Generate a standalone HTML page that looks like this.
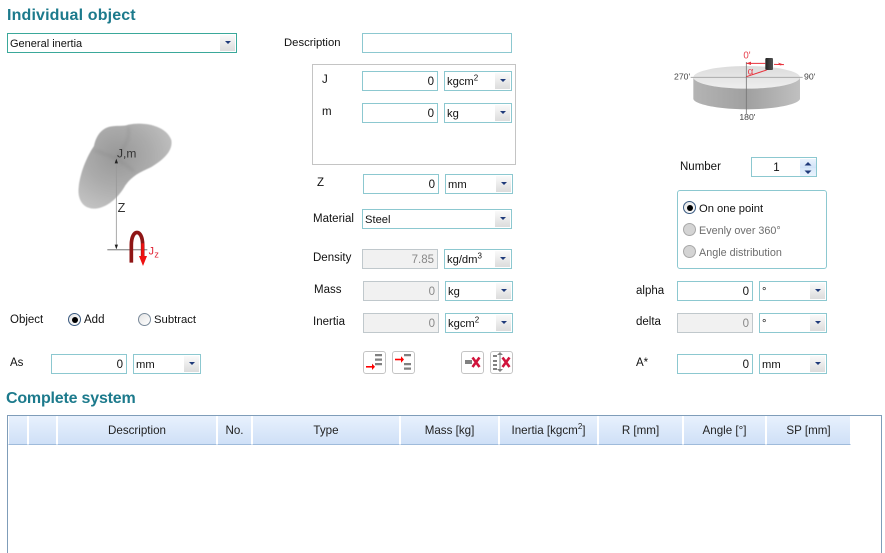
<!DOCTYPE html>
<html><head><meta charset="utf-8"><style>
html,body{margin:0;padding:0;background:#fff}
#r{position:relative;width:885px;height:553px;overflow:hidden;background:#fff;font:11.5px/14px "Liberation Sans",sans-serif;color:#111}
#r div{position:absolute;box-sizing:border-box}
.t{font:bold 16px/18px "Liberation Sans",sans-serif;color:#1c7a8c;white-space:nowrap}
.l{white-space:nowrap;margin-top:1px}
.i{width:76px;height:20px;border:1px solid #8cc8d0;background:#fff;text-align:right;padding:3px 3px 0 0}
.d{background:#f1f1f1;border-color:#c0c8cc;color:#888}
.s{width:68px;height:20px;border:1px solid #8cc8d0;background:#fff;padding:3px 0 0 2px;white-space:nowrap;font-size:11.2px}
.s sup{font-size:8px;line-height:0}
.a{right:1px;top:1px;width:15px;height:16px;background:linear-gradient(#fafafa,#dcdcdc)}
.a:after{content:"";position:absolute;left:5px;top:6px;border:3px solid transparent;border-top:3px solid #1f3a7a;border-bottom:0}
.b{width:23px;height:23px;border:1px solid #c4c4c4;border-radius:3px;background:#fff}
.b svg{position:absolute;left:0;top:0}
.h{top:416px;height:29px;background:linear-gradient(#e8f1fd,#cfe0f7);border-left:1px solid #fff;border-right:1px solid #fff;border-bottom:1px solid #9fbbdb;text-align:center;padding-top:8px;white-space:nowrap;color:#222;font-size:11.6px}
.h sup{font-size:8px;line-height:0}
.ro{width:13px;height:13px;border-radius:50%;border:1px solid #7a8a9a;background:linear-gradient(135deg,#e4e4e4,#fff)}
.on:after{content:"";position:absolute;left:2.5px;top:2.5px;width:6px;height:6px;border-radius:50%;background:#000}
.gr{background:#d4d4d4;border-color:#a8a8a8}
.g2{color:#6d6d6d;font-size:10.8px}
</style></head><body><div id="r">

<div class="t" style="left:7px;top:7px;letter-spacing:.15px">Individual object</div>
<div class="s" style="left:7px;top:33px;width:230px;border-color:#3aa89a;font-size:11px">General inertia<div class="a"></div></div>

<svg style="position:absolute;left:60px;top:110px" width="130" height="160" viewBox="0 0 390 480">
<defs><radialGradient id="g" cx="42%" cy="38%" r="70%"><stop offset="0" stop-color="#989898"/><stop offset=".5" stop-color="#ababab"/><stop offset="1" stop-color="#c4c4c4"/></radialGradient>
<filter id="bl"><feGaussianBlur stdDeviation="1.500"/></filter><filter id="b2"><feGaussianBlur stdDeviation="5"/></filter></defs>
<g filter="url(#bl)">
<path d="M102 108C108 78 124 56 150 50C172 46 190 50 206 44C250 34 318 46 334 90C340 122 310 150 272 172C240 186 216 198 196 226C176 262 140 296 100 296C68 294 52 268 56 232C60 190 80 140 102 108Z" fill="url(#g)"/>
<path d="M104 122C130 130 170 140 222 184M168 146C190 110 214 90 204 50" fill="none" stroke="#777" stroke-width="5" opacity=".35" filter="url(#b2)"/>
</g>
<path d="M169 150V415" stroke="#999" stroke-width="2.500"/>
<path d="M169 146l-5 14h10zM169 418l-5-14h10z" fill="#222"/>
<path d="M142 419H262" stroke="#999" stroke-width="4"/>
<path d="M214 458V405C214 355 248 355 248 405V440" fill="none" stroke="#8f1616" stroke-width="11"/>
<path d="M248 400V440" stroke="#e11" stroke-width="8"/>
<path d="M237 438H261L249 468Z" fill="#e11"/>
<text x="171" y="143" font-family="Liberation Sans" font-size="36" fill="#333">J,m</text>
<text x="173" y="306" font-family="Liberation Sans" font-size="38" fill="#333">Z</text>
<text x="266" y="433" font-family="Liberation Sans" font-size="32" fill="#e01f30">J</text>
<text x="283" y="443" font-family="Liberation Sans" font-size="27" fill="#e01f30">z</text>
</svg>

<div class="l" style="left:10px;top:312px">Object</div>
<div class="ro on" style="left:68px;top:313px;border-color:#3a5a80"></div><div class="l" style="left:84px;top:312px">Add</div>
<div class="ro" style="left:138px;top:313px"></div><div class="l" style="left:154px;top:312px;font-size:11.3px">Subtract</div>

<div class="l" style="left:10px;top:355px">As</div>
<div class="i" style="left:51px;top:354px">0</div>
<div class="s" style="left:133px;top:354px">mm<div class="a"></div></div>

<div class="l" style="left:284px;top:35px;font-size:11.3px">Description</div>
<div class="i" style="left:362px;top:33px;width:150px"></div>

<div style="left:312px;top:64px;width:204px;height:101px;border:1px solid #c4c4c4"></div>
<div class="l" style="left:322px;top:72px">J</div>
<div class="i" style="left:362px;top:71px">0</div>
<div class="s" style="left:444px;top:71px">kgcm<sup>2</sup><div class="a"></div></div>
<div class="l" style="left:322px;top:104px">m</div>
<div class="i" style="left:362px;top:103px">0</div>
<div class="s" style="left:444px;top:103px">kg<div class="a"></div></div>

<div class="l" style="left:317px;top:175px">Z</div>
<div class="i" style="left:363px;top:174px">0</div>
<div class="s" style="left:445px;top:174px">mm<div class="a"></div></div>

<div class="l" style="left:313px;top:211px">Material</div>
<div class="s" style="left:362px;top:209px;width:150px">Steel<div class="a"></div></div>

<div class="l" style="left:313px;top:250px">Density</div>
<div class="i d" style="left:362px;top:249px">7.85</div>
<div class="s" style="left:444px;top:249px">kg/dm<sup>3</sup><div class="a"></div></div>

<div class="l" style="left:314px;top:282px">Mass</div>
<div class="i d" style="left:363px;top:281px">0</div>
<div class="s" style="left:445px;top:281px">kg<div class="a"></div></div>

<div class="l" style="left:313px;top:314px">Inertia</div>
<div class="i d" style="left:363px;top:313px">0</div>
<div class="s" style="left:445px;top:313px">kgcm<sup>2</sup><div class="a"></div></div>

<div class="b" style="left:363px;top:351px"><svg width="21" height="21"><path d="M11 2h7v2.200h-7zM11 6.500h7v2.200h-7zM11 11h7v2.200h-7z" fill="#808080"/><path d="M2 14.800h8" stroke="#f00" stroke-width="1.600"/><path d="M11 14.800l-3-3.200v6.400z" fill="#f00"/></svg></div>
<div class="b" style="left:392px;top:351px"><svg width="21" height="21"><path d="M11 2h7v2.200h-7zM11 11h7v2.200h-7zM11 15.500h7v2.200h-7z" fill="#808080"/><path d="M2 7.500h8" stroke="#f00" stroke-width="1.600"/><path d="M11 7.500l-3-3.200v6.400z" fill="#f00"/></svg></div>
<div class="b" style="left:461px;top:351px"><svg width="21" height="21"><path d="M3 8h7v4H3z" fill="#808080"/><path d="M10.500 5.500l7 9.500M17.500 5.500l-7 9.500" stroke="#d0143c" stroke-width="2.600"/></svg></div>
<div class="b" style="left:490px;top:351px"><svg width="21" height="21"><path d="M2 3h4v2H2zM2 8h4v2H2zM2 12h4v2H2zM2 16h4v2H2z" fill="#808080"/><path d="M9 3v15" stroke="#808080"/><path d="M9 0l-3 3h6zM9 20l-3-3h6z" fill="#808080"/><path d="M11.500 5.500l7 9.500M18.500 5.500l-7 9.500" stroke="#d0143c" stroke-width="2.600"/></svg></div>

<svg style="position:absolute;left:660px;top:40px" width="170" height="90" viewBox="0 0 510 270">
<defs><linearGradient id="s" x1="0" x2="1"><stop offset="0" stop-color="#b4b4b4"/><stop offset=".5" stop-color="#a0a0a0"/><stop offset="1" stop-color="#c0c0c0"/></linearGradient>
<linearGradient id="u" x1="0" y1="0" x2="0" y2="1"><stop offset="0" stop-color="#dcdcdc"/><stop offset="1" stop-color="#eeeeee"/></linearGradient>
<linearGradient id="c" x1="0" x2="1"><stop offset="0" stop-color="#222"/><stop offset="1" stop-color="#555"/></linearGradient></defs>
<path d="M100 112V176C100 192 172 208 260 208C348 208 420 192 420 176V112Z" fill="url(#s)"/>
<ellipse cx="260" cy="112" rx="160" ry="34" fill="url(#u)"/>
<path d="M92 112H428" stroke="#aaa" stroke-width="3"/>
<path d="M259 66V222" stroke="#777" stroke-width="2.500"/>
<rect x="316" y="54" width="23" height="36" rx="3" fill="url(#c)"/>
<path d="M259 70H316M342 73L372 74M259 110L320 90" stroke="#e8323c" stroke-width="3" fill="none"/>
<path d="M259 70l14-5v10zM372 74l-18-6 6 8z" fill="#e8323c"/>
<text x="250" y="56" font-family="Liberation Sans" font-size="29" fill="#e8404c">0'</text>
<text x="263" y="103" font-family="Liberation Sans" font-size="30" fill="#e8404c">α</text>
<text x="42" y="118" font-family="Liberation Sans" font-size="26" fill="#444">270'</text>
<text x="432" y="118" font-family="Liberation Sans" font-size="26" fill="#444">90'</text>
<text x="238" y="240" font-family="Liberation Sans" font-size="26" fill="#444">180'</text>
</svg>

<div class="l" style="left:680px;top:159px">Number</div>
<div class="i" style="left:751px;top:157px;width:66px;text-align:center;padding:3px 15px 0 0;border-width:1.500px">1
<div style="right:0;top:1px;width:16px;height:8.500px;background:linear-gradient(#eaf3fd,#cfe2f8)"></div>
<div style="right:0;top:9.500px;width:16px;height:8.500px;background:linear-gradient(#d8e8fa,#eaf3fd)"></div>
<svg style="position:absolute;right:3px;top:3px" width="10" height="14"><path d="M5 1l3.500 3.500h-7zM1.500 9.500h7L5 13z" fill="#1f3a7a"/></svg></div>

<div style="left:677px;top:190px;width:150px;height:79px;border:1px solid #8cc8d0;border-radius:3px"></div>
<div class="ro on" style="left:683px;top:201px;border-color:#3a5a80"></div><div class="l" style="left:699px;top:201px;font-size:11.2px">On one point</div>
<div class="ro gr" style="left:683px;top:223px"></div><div class="l g2" style="left:699px;top:223px">Evenly over 360°</div>
<div class="ro gr" style="left:683px;top:245px"></div><div class="l g2" style="left:699px;top:245px">Angle distribution</div>

<div class="l" style="left:636px;top:283px">alpha</div>
<div class="i" style="left:677px;top:281px">0</div>
<div class="s" style="left:759px;top:281px">°<div class="a"></div></div>
<div class="l" style="left:636px;top:314px">delta</div>
<div class="i d" style="left:677px;top:313px">0</div>
<div class="s" style="left:759px;top:313px">°<div class="a"></div></div>
<div class="l" style="left:636px;top:355px">A*</div>
<div class="i" style="left:677px;top:354px">0</div>
<div class="s" style="left:759px;top:354px">mm<div class="a"></div></div>

<div class="t" style="left:6px;top:390px;letter-spacing:-.2px">Complete system</div>
<div style="left:7px;top:415px;width:875px;height:150px;border:1px solid #7f9db9"></div>
<div class="h" style="left:8px;width:20px"></div>
<div class="h" style="left:28px;width:29px"></div>
<div class="h" style="left:57px;width:160px">Description</div>
<div class="h" style="left:217px;width:35px">No.</div>
<div class="h" style="left:252px;width:148px">Type</div>
<div class="h" style="left:400px;width:99px">Mass [kg]</div>
<div class="h" style="left:499px;width:99px">Inertia [kgcm<sup>2</sup>]</div>
<div class="h" style="left:598px;width:85px">R [mm]</div>
<div class="h" style="left:683px;width:83px">Angle [°]</div>
<div class="h" style="left:766px;width:85px">SP [mm]</div>

</div></body></html>
